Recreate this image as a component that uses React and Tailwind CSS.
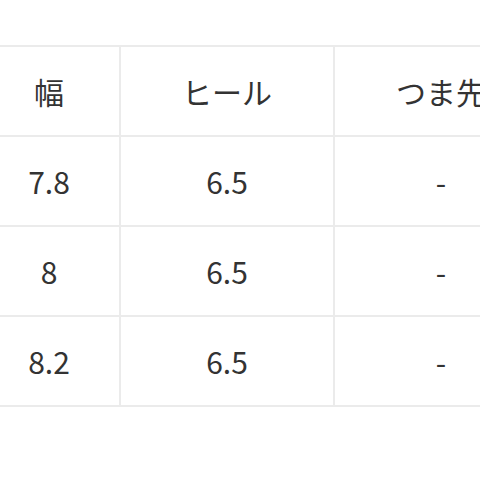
import React from "react";

const headers = ["幅", "ヒール", "つま先"];
const rows = [
  ["7.8", "6.5", "-"],
  ["8", "6.5", "-"],
  ["8.2", "6.5", "-"],
];

const App = () => {
  return (
    <div
      className="w-[480px] h-[480px] overflow-hidden bg-white text-[#333333]"
      style={{ fontFamily: '"Noto Sans CJK JP", "Noto Sans", sans-serif' }}
    >
      <table className="mt-[45px] ml-[-23px] border-collapse table-fixed w-[570px]">
        <colgroup>
          <col className="w-[142px]" />
          <col className="w-[214px]" />
          <col className="w-[214px]" />
        </colgroup>
        <thead>
          <tr>
            {headers.map((h) => (
              <th
                key={h}
                className="h-[90px] border-2 border-[#ebebeb] text-center font-normal text-[30px] whitespace-nowrap"
              >
                {h}
              </th>
            ))}
          </tr>
        </thead>
        <tbody>
          {rows.map((r, i) => (
            <tr key={i}>
              {r.map((c, j) => (
                <td
                  key={j}
                  className="h-[90px] border-2 border-[#ebebeb] text-center text-[30px]"
                >
                  {c}
                </td>
              ))}
            </tr>
          ))}
        </tbody>
      </table>
    </div>
  );
};

export default App;
